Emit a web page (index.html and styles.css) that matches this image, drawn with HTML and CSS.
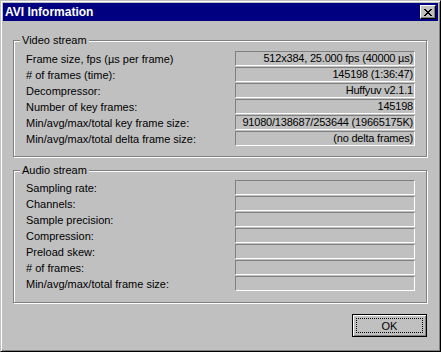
FILE: index.html
```html
<!DOCTYPE html>
<html lang="en">
<head>
    <meta charset="utf-8">
    <title>AVI Information</title>
    <link rel="stylesheet" href="styles.css">
</head>
<body>
    <div class="window">
        <div class="titlebar">
            <span class="title">AVI Information</span>
            <div class="close">
                <svg width="8" height="7" viewBox="0 0 8 7">
                    <path d="M0 0h2v1h1v1h2v-1h1v-1h2v1h-1v1h-1v1h-1v1h1v1h1v1h1v1h-2v-1h-1v-1h-2v1h-1v1h-2v-1h1v-1h1v-1h1v-1h-1v-1h-1v-1h-1z" fill="#000"/>
                </svg>
            </div>
        </div>
        <div class="content">
            <div class="group video">
                <span class="legend">Video stream</span>
                <div class="row"><span class="label">Frame size, fps (&micro;s per frame)</span><span class="field">512x384, 25.000 fps (40000 &micro;s)</span></div>
                <div class="row"><span class="label"># of frames (time):</span><span class="field">145198 (1:36:47)</span></div>
                <div class="row"><span class="label">Decompressor:</span><span class="field">Huffyuv v2.1.1</span></div>
                <div class="row"><span class="label">Number of key frames:</span><span class="field">145198</span></div>
                <div class="row"><span class="label">Min/avg/max/total key frame size:</span><span class="field">91080/138687/253644 (19665175K)</span></div>
                <div class="row"><span class="label">Min/avg/max/total delta frame size:</span><span class="field">(no delta frames)</span></div>
            </div>
            <div class="group audio">
                <span class="legend">Audio stream</span>
                <div class="row"><span class="label">Sampling rate:</span><span class="field"></span></div>
                <div class="row"><span class="label">Channels:</span><span class="field"></span></div>
                <div class="row"><span class="label">Sample precision:</span><span class="field"></span></div>
                <div class="row"><span class="label">Compression:</span><span class="field"></span></div>
                <div class="row"><span class="label">Preload skew:</span><span class="field"></span></div>
                <div class="row"><span class="label"># of frames:</span><span class="field"></span></div>
                <div class="row"><span class="label">Min/avg/max/total frame size:</span><span class="field"></span></div>
            </div>
            <div class="actions">
                <div class="button default"><span class="focus">OK</span></div>
            </div>
        </div>
    </div>
</body>
</html>
```

FILE: styles.css
```css
body {
    margin: 0;
    background-color: #c0c0c0;
    font-family: "Liberation Sans", Arial, sans-serif;
    font-size: 11px;
    color: #000;
}

.window {
    box-sizing: border-box;
    width: 441px;
    height: 352px;
    padding: 1px;
    background-color: #c0c0c0;
    border: 1px solid;
    border-color: #c0c0c0 #000 #000 #c0c0c0;
    box-shadow: inset 1px 1px 0 #fff, inset -1px -1px 0 #808080;
}

.titlebar {
    display: flex;
    align-items: center;
    height: 18px;
    margin: 1px;
    background-color: #000080;
    color: #fff;
}

.title {
    flex: 1;
    padding-left: 2px;
    font-weight: bold;
    font-size: 12px;
}

.close {
    box-sizing: border-box;
    display: flex;
    align-items: center;
    justify-content: center;
    width: 16px;
    height: 14px;
    margin-right: 2px;
    background-color: #c0c0c0;
    border: 1px solid;
    border-color: #fff #000 #000 #fff;
    box-shadow: inset -1px -1px 0 #808080;
}

.content {
    padding: 0 0 0 11px;
}

.group {
    position: relative;
    box-sizing: border-box;
    width: 414px;
    border: 1px solid #808080;
    box-shadow: 1px 1px 0 #fff, inset 1px 1px 0 #fff;
    padding: 10px 11px 10px 12px;
}

.video {
    margin-top: 19px;
}

.audio {
    margin-top: 13px;
    padding-top: 9px;
    padding-bottom: 11px;
}

.legend {
    position: absolute;
    top: -8px;
    left: 6px;
    padding: 0 2px 0 2px;
    background-color: #c0c0c0;
    line-height: 14px;
}

.row {
    display: flex;
    align-items: center;
    height: 15px;
    margin-bottom: 1px;
}

.row:last-child {
    margin-bottom: 0;
}

.label {
    flex: 1;
    white-space: nowrap;
}

.field {
    box-sizing: border-box;
    width: 180px;
    height: 15px;
    padding-right: 1px;
    border: 1px solid;
    border-color: #808080 #fff #fff #808080;
    text-align: right;
    line-height: 13px;
    white-space: nowrap;
    overflow: hidden;
    letter-spacing: -0.2px;
}

.actions {
    display: flex;
    justify-content: flex-end;
    width: 414px;
    margin-top: 11px;
}

.button {
    box-sizing: border-box;
    width: 75px;
    height: 23px;
    padding: 3px;
    border: 1px solid #000;
    box-shadow: inset 1px 1px 0 #fff, inset -1px -1px 0 #808080;
}

.focus {
    box-sizing: border-box;
    display: flex;
    align-items: center;
    justify-content: center;
    height: 100%;
    border: 1px dotted #000;
}
```
